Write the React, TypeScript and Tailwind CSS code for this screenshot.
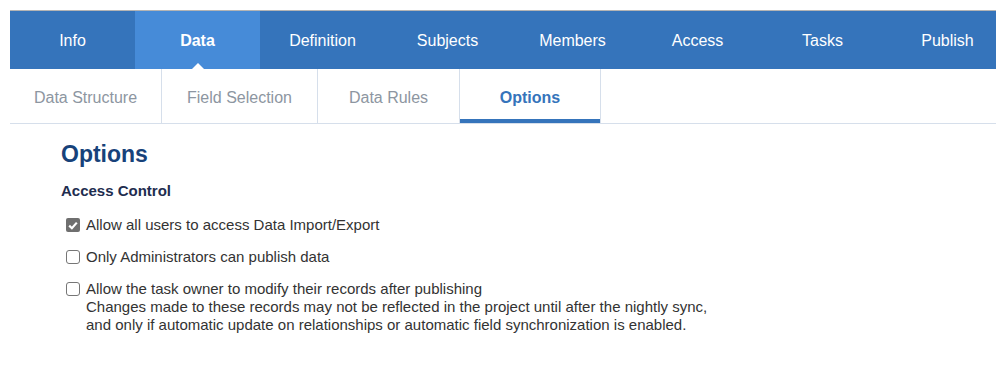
const tabs = ["Info", "Data", "Definition", "Subjects", "Members", "Access", "Tasks", "Publish"];

const subTabs = [
  { label: "Data Structure", w: "w-[152px]" },
  { label: "Field Selection", w: "w-[156px]" },
  { label: "Data Rules", w: "w-[142px]" },
  { label: "Options", w: "w-[141px]", active: true },
];

const Box = ({ checked }: { checked?: boolean }) =>
  checked ? (
    <span className="mt-[2px] flex h-[14px] w-[14px] shrink-0 items-center justify-center rounded-[2px] bg-[#6f6f6f]">
      <svg width="10" height="9" viewBox="0 0 10 9">
        <path d="M1.2 4.6 L3.9 7.2 L8.8 1.6" fill="none" stroke="#fff" strokeWidth="2.2" />
      </svg>
    </span>
  ) : (
    <span className="mt-[2px] h-[14px] w-[14px] shrink-0 rounded-[3px] border border-[#767676] bg-white" />
  );

export default function App() {
  return (
    <div className="h-[376px] w-[1006px] bg-white pt-[10px] font-['Liberation_Sans',Arial,sans-serif]">
      <div className="mx-[10px] border-t border-[#b4b4b4]">
        <nav className="flex h-[58px] overflow-hidden bg-[#3574bb]">
          {tabs.map((t) => (
            <div
              key={t}
              className={`relative flex w-[125px] shrink-0 items-center justify-center pt-[2px] text-[16px] text-white ${
                t === "Data" ? "bg-[#468bd8] font-bold" : ""
              }`}
            >
              {t}
              {t === "Data" && (
                <span className="absolute bottom-0 left-1/2 h-0 w-0 -translate-x-1/2 border-x-[6px] border-b-[6px] border-x-transparent border-b-white" />
              )}
            </div>
          ))}
        </nav>
        <div className="flex h-[55px] border-b border-[#d6dfeb]">
          {subTabs.map((s) => (
            <div
              key={s.label}
              className={`relative flex ${s.w} items-center justify-center border-r border-[#d6dfeb] pt-[3px] text-[16px] ${
                s.active ? "font-bold text-[#3574bb]" : "text-[#8d96a1]"
              }`}
            >
              {s.label}
              {s.active && <span className="absolute bottom-0 left-0 right-0 h-[4px] bg-[#3574bb]" />}
            </div>
          ))}
        </div>
      </div>

      <div className="pl-[61px] pt-[17px]">
        <h1 className="text-[23px] font-bold leading-[27px] text-[#17427a]">Options</h1>
        <h2 className="mt-[14px] text-[15px] font-bold leading-[18px] text-[#1e2d4f]">Access Control</h2>
        <div className="mt-[16px] flex flex-col gap-[14px] pl-[5px] text-[15px] leading-[18px] text-[#333]">
          <label className="flex gap-[6px]">
            <Box checked />
            <span>Allow all users to access Data Import/Export</span>
          </label>
          <label className="flex gap-[6px]">
            <Box />
            <span>Only Administrators can publish data</span>
          </label>
          <label className="flex gap-[6px]">
            <Box />
            <span>
              Allow the task owner to modify their records after publishing
              <br />
              Changes made to these records may not be reflected in the project until after the nightly sync,
              <br />
              and only if automatic update on relationships or automatic field synchronization is enabled.
            </span>
          </label>
        </div>
      </div>
    </div>
  );
}
